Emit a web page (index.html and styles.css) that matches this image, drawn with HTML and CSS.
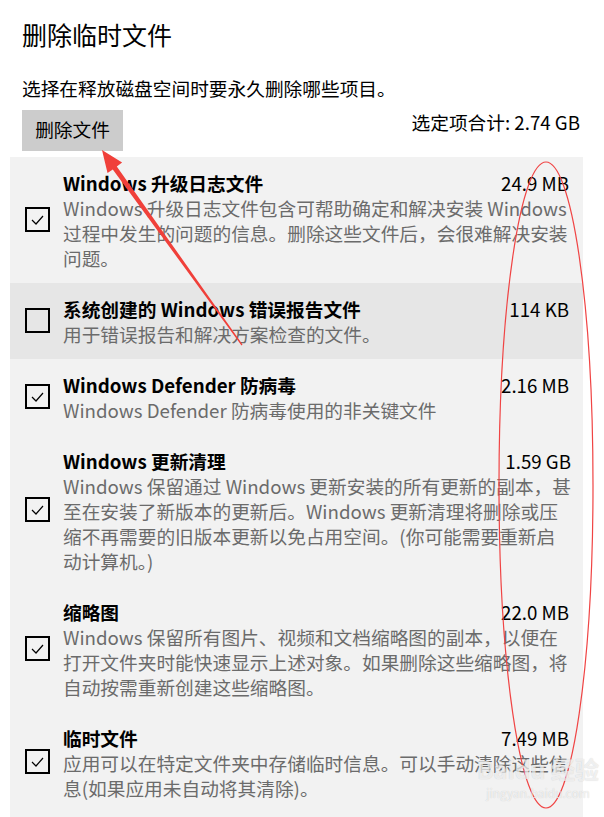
FILE: index.html
```html
<!DOCTYPE html>
<html>
  <head>
    <title>删除临时文件</title>
    <link rel="stylesheet" href="styles.css">
  </head>
  <body>
    <div class="page">
      <h1>删除临时文件</h1>
      <p class="intro">选择在释放磁盘空间时要永久删除哪些项目。</p>
      <div class="toolbar">
        <button class="remove-btn">删除文件</button>
        <span class="total">选定项合计: 2.74 GB</span>
      </div>

      <div class="list">
        <div class="row">
          <span class="check checked"><svg viewBox="0 0 21 21"><polyline points="5,11 9,15 16,7"/></svg></span>
          <div class="row-body">
            <div class="row-head"><span class="name">Windows 升级日志文件</span><span class="size">24.9 MB</span></div>
            <p class="desc">Windows 升级日志文件包含可帮助确定和解决安装 Windows<br>过程中发生的问题的信息。删除这些文件后，会很难解决安装<br>问题。</p>
          </div>
        </div>
        <div class="row selected">
          <span class="check"></span>
          <div class="row-body">
            <div class="row-head"><span class="name">系统创建的 Windows 错误报告文件</span><span class="size">114 KB</span></div>
            <p class="desc">用于错误报告和解决方案检查的文件。</p>
          </div>
        </div>
        <div class="row">
          <span class="check checked"><svg viewBox="0 0 21 21"><polyline points="5,11 9,15 16,7"/></svg></span>
          <div class="row-body">
            <div class="row-head"><span class="name">Windows Defender 防病毒</span><span class="size">2.16 MB</span></div>
            <p class="desc">Windows Defender 防病毒使用的非关键文件</p>
          </div>
        </div>
        <div class="row">
          <span class="check checked"><svg viewBox="0 0 21 21"><polyline points="5,11 9,15 16,7"/></svg></span>
          <div class="row-body">
            <div class="row-head"><span class="name">Windows 更新清理</span><span class="size">1.59 GB</span></div>
            <p class="desc">Windows 保留通过 Windows 更新安装的所有更新的副本，甚<br>至在安装了新版本的更新后。Windows 更新清理将删除或压<br>缩不再需要的旧版本更新以免占用空间。(你可能需要重新启<br>动计算机。)</p>
          </div>
        </div>
        <div class="row">
          <span class="check checked"><svg viewBox="0 0 21 21"><polyline points="5,11 9,15 16,7"/></svg></span>
          <div class="row-body">
            <div class="row-head"><span class="name">缩略图</span><span class="size">22.0 MB</span></div>
            <p class="desc">Windows 保留所有图片、视频和文档缩略图的副本，以便在<br>打开文件夹时能快速显示上述对象。如果删除这些缩略图，将<br>自动按需重新创建这些缩略图。</p>
          </div>
        </div>
        <div class="row">
          <span class="check checked"><svg viewBox="0 0 21 21"><polyline points="5,11 9,15 16,7"/></svg></span>
          <div class="row-body">
            <div class="row-head"><span class="name">临时文件</span><span class="size">7.49 MB</span></div>
            <p class="desc">应用可以在特定文件夹中存储临时信息。可以手动清除这些信<br>息(如果应用未自动将其清除)。</p>
          </div>
        </div>
      </div>
    </div>

    <!-- annotation layer: arrow + circled sizes -->
    <svg class="marks" viewBox="0 0 604 817">
      <polygon points="102,150 107.5,173.1 112.8,169.4 241.5,345.4 242.5,344.6 116.8,166.4 122.1,162.6"/>
      <ellipse cx="546" cy="485" rx="47" ry="323"/>
    </svg>
    <div class="watermark">
      <span class="wm-logo">Baidu 经验</span>
      <span class="wm-url">jingyan.baidu.com</span>
    </div>
  </body>
</html>
```

FILE: styles.css
```css
body {
  margin: 0;
  font-family: "Noto Sans CJK SC", "Noto Sans", sans-serif;
  background-color: #fff;
  color: #000;
}

.page {
  padding: 17px 0 0 0;
}

h1 {
  margin: 0 0 0 22px;
  font-size: 25px;
  font-weight: normal;
  line-height: 34px;
}

.intro {
  margin: 24px 0 0 22px;
  font-size: 18.7px;
  line-height: 25px;
}

.toolbar {
  display: flex;
  justify-content: space-between;
  align-items: flex-start;
  margin: 10px 24px 0 22px;
}

.remove-btn {
  background-color: #cccccc;
  border: none;
  font-family: inherit;
  font-size: 18.7px;
  line-height: 25px;
  padding: 6px 13px 10px;
  height: 41px;
  width: 101px;
  color: #000;
}

.total {
  font-size: 18.7px;
  line-height: 25px;
  margin-top: -1px;
}

.list {
  margin: 6px 21px 0 10px;
  background-color: #f2f2f2;
  padding-bottom: 20px;
}

.row {
  display: flex;
  align-items: center;
  padding: 13px 14px 13px 15px;
}

.row.selected {
  background-color: #e6e6e6;
}

.check {
  flex: none;
  width: 21px;
  height: 21px;
  border: 2px solid #000;
  margin-right: 13px;
  margin-top: -2px;
  display: flex;
}

.check svg {
  width: 21px;
  height: 21px;
}

.check polyline {
  fill: none;
  stroke: #000;
  stroke-width: 1.2;
}

.row-body {
  flex: 1;
}

.row-head {
  display: flex;
  justify-content: space-between;
  font-size: 18.7px;
  line-height: 25px;
}

.name {
  font-weight: bold;
}

.desc {
  margin: 0;
  font-size: 18.7px;
  line-height: 25px;
  color: #6b6b6b;
  white-space: nowrap;
}

.marks {
  position: absolute;
  left: 0;
  top: 0;
  width: 604px;
  height: 817px;
  pointer-events: none;
}

.marks polygon {
  fill: #f0403a;
}

.marks ellipse {
  fill: none;
  stroke: #f04444;
  stroke-width: 1.2;
}

.watermark {
  position: absolute;
  left: 484px;
  top: 752px;
  width: 108px;
  display: flex;
  flex-direction: column;
  align-items: center;
  color: rgba(255, 255, 255, 0.7);
  text-shadow: 0 0 1px rgba(0, 0, 0, 0.2);
  pointer-events: none;
}

.wm-logo {
  font-size: 24px;
  font-weight: bold;
  line-height: 34px;
  white-space: nowrap;
}

.wm-url {
  font-size: 12px;
  line-height: 14px;
}
```
